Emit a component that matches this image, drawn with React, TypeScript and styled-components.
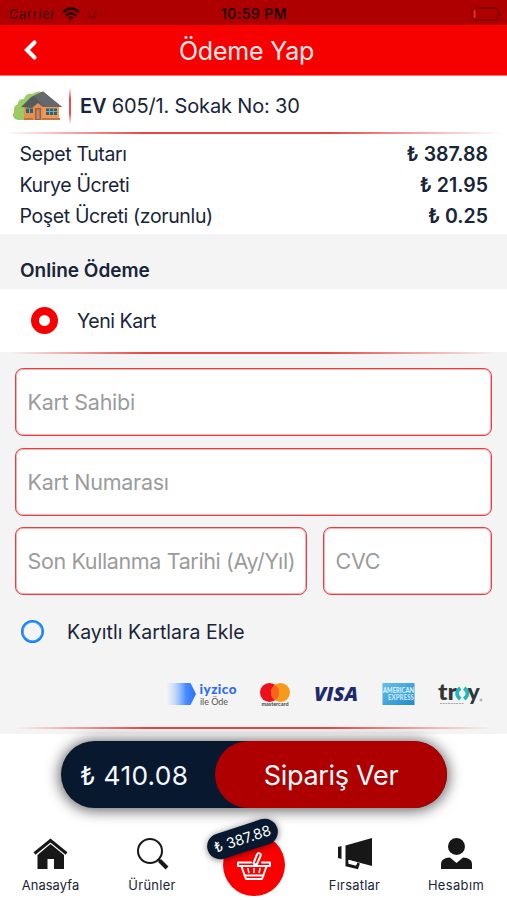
import React from "react";
import styled, { createGlobalStyle } from "styled-components";

const Global = createGlobalStyle`
  * { box-sizing: border-box; }
  body { margin: 0; background: #fff; font-family: Inter, "Liberation Sans", sans-serif; color: #182538; }
  svg { display: block; flex: none; overflow: visible; }
`;

const Screen = styled.main`
  width: 507px;
  height: 900px;
  display: flex;
  flex-direction: column;
  overflow: hidden;
  background: #fff;
  white-space: nowrap;
`;

const StatusBar = styled.div`
  height: 25px;
  flex: none;
  display: grid;
  grid-template-columns: 1fr auto 1fr;
  align-items: center;
  padding: 3px 6px 0 7px;
  background: #ae0000;
  color: #350000;
  font-size: 13px;
`;
const Carrier = styled.div`
  display: flex;
  align-items: center;
  gap: 6px;
  padding-left: 2px;
  letter-spacing: 0.6px;
`;
const Clock = styled.div`
  font-size: 13.8px;
  line-height: 16px;
  font-weight: 600;
  color: #1c0000;
  letter-spacing: 0.5px;
`;
const BatterySlot = styled.div`
  justify-self: end;
`;

const Header = styled.header`
  height: 51px;
  flex: none;
  display: grid;
  grid-template-columns: 60px 1fr 74px;
  align-items: center;
  background: #f70000;
  border-bottom: 1px solid #ff7070;
`;
const BackButton = styled.button`
  border: 0;
  background: none;
  padding: 0 0 0 24px;
`;
const Title = styled.h1`
  margin: 0;
  padding-top: 1px;
  color: #ffe9e9;
  font-size: 25px;
  font-weight: 400;
  text-align: center;
  letter-spacing: -0.2px;
`;

const Divider = styled.div<{ $inset?: number }>`
  height: 2px;
  flex: none;
  margin: 0 ${(p) => p.$inset ?? 5}px;
  background: linear-gradient(90deg, transparent, #e64646 28%, #e64646 65%, transparent);
`;
const VerticalRule = styled.i<{ $height: number }>`
  width: 2px;
  height: ${(p) => p.$height}px;
  background: linear-gradient(transparent, #f04a4f 30%, #f04a4f 70%, transparent);
`;

const Address = styled.section`
  height: 56px;
  flex: none;
  display: flex;
  align-items: center;
  padding: 3px 0 0 13px;
  font-size: 20px;
  letter-spacing: -0.16px;
`;
const AddressText = styled.div`
  margin-left: 9px;
  b { font-weight: 600; }
`;
const HouseSlot = styled.div`
  width: 56px;
`;

const Totals = styled.dl`
  margin: 0;
  height: 100px;
  flex: none;
  padding: 4px 19px 0;
`;
const TotalRow = styled.div`
  height: 31px;
  display: flex;
  align-items: center;
  justify-content: space-between;
  font-size: 19.5px;
`;
const TotalName = styled.dt`
  padding-left: 0.5px;
  letter-spacing: -0.36px;
`;
const TotalValue = styled.dd`
  margin: 0;
  font-weight: 600;
`;

const SectionTitle = styled.h2`
  margin: 0;
  height: 55px;
  flex: none;
  padding: 23px 20px 0;
  background: #f4f4f4;
  font-size: 19px;
  line-height: 28px;
  font-weight: 600;
`;
const CardOption = styled.label`
  height: 63px;
  flex: none;
  display: flex;
  align-items: center;
  gap: 19px;
  padding-left: 31px;
  font-size: 19.5px;
  letter-spacing: -0.45px;
`;
const SelectedDot = styled.span`
  width: 27px;
  height: 27px;
  border: 8.5px solid #f90000;
  border-radius: 50%;
`;
const Payment = styled.section`
  height: 382px;
  flex: none;
  background: #f4f4f4;
`;
const Fields = styled.div`
  padding: 14px 15px 0;
  display: grid;
  grid-template-columns: 292px 169px;
  grid-auto-rows: 68px;
  gap: 11.5px 16px;
`;
const Field = styled.div<{ $wide?: boolean; $spacing?: number }>`
  grid-column: ${(p) => (p.$wide ? "1 / -1" : "auto")};
  display: flex;
  align-items: center;
  padding: 0 0 0 11.5px;
  border: 1px solid #e43f43;
  border-radius: 8px;
  box-shadow: inset 0 0 0 1px rgba(228, 63, 67, 0.4);
  background: #fff;
  color: #9b9b9b;
  font-size: 21.5px;
  letter-spacing: ${(p) => p.$spacing ?? -0.25}px;
`;
const SaveOption = styled.label`
  display: flex;
  align-items: center;
  height: 28px;
  margin-top: 22px;
  padding-left: 21px;
  gap: 23px;
  font-size: 19.5px;
  letter-spacing: 0.04px;
  line-height: 28px;
`;
const SaveText = styled.span`
  padding-top: 1px;
`;
const EmptyDot = styled.span`
  width: 23px;
  height: 23px;
  border: 2px solid #1684f8;
  border-radius: 50%;
  box-shadow: inset 0 0 0 0.6px #1684f8;
`;
const Brands = styled.div`
  height: 82px;
  display: flex;
  align-items: center;
  padding: 16px 0 0 166px;
`;
const BrandSlot = styled.div<{ $width: number }>`
  width: ${(p) => p.$width}px;
  flex: none;
`;

const OrderArea = styled.div`
  height: 93px;
  flex: none;
  padding: 7px 0 0 61px;
`;
const OrderPill = styled.div`
  width: 386px;
  height: 67px;
  display: flex;
  border-radius: 34px;
  background: #08192f;
  color: #f6f8ff;
  font-size: 26.3px;
  box-shadow: 0 1px 14px 2px rgba(0, 0, 0, 0.6);
`;
const OrderTotal = styled.div`
  width: 154px;
  padding: 1px 0 0 19px;
  display: flex;
  align-items: center;
  letter-spacing: 0.3px;
`;
const OrderButton = styled.button`
  flex: 1;
  border: 0;
  padding: 1px 0 0;
  border-radius: 34px;
  background: #ae0000;
  color: #fff;
  font: inherit;
  font-size: 27px;
  letter-spacing: -0.3px;
`;

const Nav = styled.nav`
  height: 73px;
  flex: none;
  display: grid;
  grid-template-columns: 101px 0 102px 101px 101px 0 102px;
`;
const NavItem = styled.a<{ $spacing?: number }>`
  display: flex;
  flex-direction: column;
  align-items: center;
  padding-top: 10px;
  gap: 7px;
  font-size: 12.9px;
  line-height: 17px;
  letter-spacing: ${(p) => p.$spacing ?? 0.1}px;
`;
const NavRule = styled.div`
  padding-top: 20px;
  display: flex;
  justify-content: center;
`;
const Basket = styled.a`
  position: relative;
  justify-self: center;
  width: 62px;
  height: 62px;
  margin: 7px 0 0 0;
  border-radius: 50%;
  background: #fb0000;
  display: grid;
  place-items: center;
`;
const BasketTotal = styled.span`
  position: absolute;
  left: -16.5px;
  top: -8px;
  width: 73px;
  height: 26px;
  border-radius: 13px;
  background: #08192f;
  color: #fff;
  font-size: 14.5px;
  line-height: 26px;
  text-align: center;
  transform: rotate(-18deg);
  box-shadow: 0 1px 7px rgba(0, 0, 0, 0.5);
`;

const Wifi = () => (
  <svg width="18" height="14" viewBox="0 0 18 14" fill="none" stroke="#260000" strokeWidth="2.5">
    <path d="M1 5.2Q9-2 17 5.2M4 8.5Q9 4 14 8.5" />
    <path d="M6.4 10.5Q9 8.4 11.6 10.5L9 13.2Z" fill="#260000" stroke="none" />
  </svg>
);
const Spinner = () => (
  <svg width="12" height="12" viewBox="0 0 12 12" stroke="#5c0000" strokeWidth="1.4" strokeLinecap="round">
    <path d="M6 1v1.8M9.5 2.5 8.3 3.7M11 6H9.2M9.5 9.5 8.3 8.3M6 11V9.2M2.5 9.5l1.2-1.2M1 6h1.8" opacity=".75" />
  </svg>
);
const Battery = () => (
  <svg width="30" height="14" viewBox="0 0 30 14">
    <rect x="1" y="1" width="26" height="12" rx="3" fill="none" stroke="#7c0000" strokeWidth="1.3" />
    <path d="M28.3 5v4q1.4-.6 1.4-2t-1.4-2" fill="#7c0000" />
    <rect x="2.8" y="3" width="1.7" height="8" rx=".7" fill="#ef3131" />
  </svg>
);
const House = () => (
  <svg width="50" height="32" viewBox="0 0 50 32">
    <path d="M14 30H5a5 5 0 0 1-4-8Q0 16 5 14 5 9 11 9q2-6 8-5Q26-1 33 4v12L14 30Z" fill="#9bcb62" />
    <path d="M11 16 29 5l17 12v13H11Z" fill="#e5904f" />
    <path d="M30 17h16v13H30Z" fill="#f09b54" />
    <path d="M8 17 18 7 30 1.500 49 17H30L25 13l-6 5Z" fill="#555c61" />
    <path d="m30 1.500 19 15.500H31L21 6Z" fill="#65696c" />
    <path d="M13 18.500h7v4.500h-7Zm20 0h11v6.500H33Z" fill="#365f69" />
    <path d="M36.500 18.500V25m4-6.500V25M33 21.500h11M16.500 18.500V23" stroke="#80bac0" strokeWidth=".8" />
    <path d="M22 18h6v12h-6Z" fill="#9e6048" />
    <path d="M23.500 19.500h3V29h-3Z" fill="#c18a62" />
    <path d="M11 28h9v2h-9zM29 28h18v2H29z" fill="#bc7448" />
  </svg>
);

const BrandName = styled.text<{ $size: number; $weight?: number; $fill: string; $italic?: boolean }>`
  font-family: ${(p) => (p.$italic ? '"Open Sans"' : "Lato")}, sans-serif;
  font-size: ${(p) => p.$size}px;
  font-weight: ${(p) => p.$weight ?? 400};
  font-style: ${(p) => (p.$italic ? "italic" : "normal")};
  fill: ${(p) => p.$fill};
`;
const Iyzico = () => (
  <svg width="72" height="28" viewBox="0 0 72 28">
    <defs>
      <linearGradient id="iy">
        <stop stopColor="#bfd5ff" stopOpacity=".1" />
        <stop offset=".65" stopColor="#478cff" />
        <stop offset="1" stopColor="#2870f5" />
      </linearGradient>
    </defs>
    <path d="M1 3h23.500l5.500 11-5.500 11H1Z" fill="url(#iy)" />
    <BrandName x="33.500" y="13.500" $size={13.5} $weight={900} $fill="#2f6bf2" textLength="37">iyzico</BrandName>
    <BrandName x="34" y="25" $size={9} $fill="#555" textLength="28">ile Öde</BrandName>
  </svg>
);
const Mastercard = () => (
  <svg width="30" height="28" viewBox="0 0 30 28">
    <circle cx="9.500" cy="12.500" r="9.500" fill="#ec101f" />
    <circle cx="20.500" cy="12.500" r="9.500" fill="#f69a1d" />
    <path d="M15 4.700a9.500 9.500 0 0 1 0 15.600 9.500 9.500 0 0 1 0-15.600" fill="#f66319" />
    <BrandName x="1.500" y="25.500" $size={5.5} $weight={700} $fill="#444" textLength="27">mastercard</BrandName>
  </svg>
);
const Visa = () => (
  <svg width="46" height="28" viewBox="0 0 46 28">
    <BrandName x="1" y="21" $size={20} $weight={800} $italic $fill="#1c2a6c" textLength="44" lengthAdjust="spacingAndGlyphs">VISA</BrandName>
  </svg>
);
const Amex = () => (
  <svg width="33" height="28" viewBox="0 0 33 28">
    <defs>
      <linearGradient id="ax" x2="1" y2="1">
        <stop stopColor="#68bee9" />
        <stop offset="1" stopColor="#218bc9" />
      </linearGradient>
    </defs>
    <path d="M.5 3h32v22H.500Z" fill="url(#ax)" />
    <BrandName x="1" y="13" $size={6.5} $weight={900} $fill="#d8f3ff" textLength="31" lengthAdjust="spacingAndGlyphs">AMERICAN</BrandName>
    <BrandName x="6" y="19.500" $size={6.5} $weight={900} $fill="#c8eaff" textLength="26" lengthAdjust="spacingAndGlyphs">EXPRESS</BrandName>
  </svg>
);
const Troy = () => (
  <svg width="46" height="28" viewBox="0 0 46 28">
    <BrandName x="0" y="20" $size={23} $weight={900} $fill="#333638" textLength="19" lengthAdjust="spacingAndGlyphs">tr</BrandName>
    <path d="M22.300 8q-6.500 5.500 0 11M26.200 8q6.500 5.500 0 11" fill="none" stroke="#20b6bd" strokeWidth="3.700" />
    <BrandName x="29.500" y="20" $size={23} $weight={900} $fill="#333638">y</BrandName>
    <path d="M2 23.500h24" stroke="#aaa" strokeWidth="1" strokeDasharray="2 .7" />
    <circle cx="43" cy="20" r="1" fill="none" stroke="#777" strokeWidth=".6" />
  </svg>
);

const Home = () => (
  <svg width="35" height="33" viewBox="0 0 35 33" fill="#171717">
    <path d="M4.500 18 17.500 7 31 18v14H21V22h-6.500v10h-10Z" />
    <path d="M1.500 16.500 17.500 3.500l16 13" fill="none" stroke="#171717" strokeWidth="3" />
  </svg>
);
const Search = () => (
  <svg width="35" height="33" viewBox="0 0 35 33" fill="none" stroke="#171717">
    <circle cx="15" cy="14" r="12" strokeWidth="2" />
    <path d="m23 22 2 2" strokeWidth="2" />
    <path d="m24.500 23.500 7.500 7.500" strokeWidth="4" />
  </svg>
);
const Megaphone = () => (
  <svg width="35" height="33" viewBox="0 0 35 33" fill="#171717">
    <path d="M1 10 4.500 9v13L1 21ZM8.500 8.500 35 1v28L8.500 22Z" />
    <path d="M10 22v6l10 2.500 1.500-4.500" fill="none" stroke="#171717" strokeWidth="3" />
    <path d="m11.500 24 8.500 2.500" stroke="#fff" strokeWidth="2" />
  </svg>
);
const Person = () => (
  <svg width="35" height="33" viewBox="0 0 35 33" fill="#171717">
    <circle cx="17.500" cy="9.500" r="8.500" />
    <path d="M2 32v-5Q2 21 11 20.500l6.500 5.500 6.500-5.500Q33 21 33 27v5Z" />
  </svg>
);
const BasketIcon = () => (
  <svg width="36" height="32" viewBox="0 0 36 32" fill="none" stroke="#fff" strokeWidth="2" strokeLinejoin="round" strokeLinecap="round">
    <path d="M15 13.500H2V17h32v-3.500h-8M5.500 17.500 10 30h16l4.500-12.500M8.500 26.500h19" />
    <path d="m12 19.500.8 4m5.200-4v4m6-4-.8 4" strokeWidth="1.500" />
    <path d="m17.500 14 3.500-8.500q1-2 2.700-1.200t.8 2.700L21 15q-3 1-3.500-1Z" />
  </svg>
);

const totals = [
  ["Sepet Tutarı", "₺ 387.88"],
  ["Kurye Ücreti", "₺ 21.95"],
  ["Poşet Ücreti (zorunlu)", "₺ 0.25"],
];

export default function App() {
  return (
    <Screen>
      <Global />
      <StatusBar>
        <Carrier>Carrier <Wifi /><Spinner /></Carrier>
        <Clock>10:59 PM</Clock>
        <BatterySlot><Battery /></BatterySlot>
      </StatusBar>
      <Header>
        <BackButton aria-label="Geri">
          <svg width="13" height="20" viewBox="0 0 13 20" fill="none" stroke="#fff" strokeWidth="4.200" strokeLinecap="round">
            <path d="M10.500 2.500 3 10l7.500 7.500" />
          </svg>
        </BackButton>
        <Title>Ödeme Yap</Title>
      </Header>
      <Address>
        <HouseSlot><House /></HouseSlot>
        <VerticalRule $height={36} />
        <AddressText><b>EV</b> 605/1. Sokak No: 30</AddressText>
      </Address>
      <Divider />
      <Totals>
        {totals.map(([name, value]) => (
          <TotalRow key={name}>
            <TotalName>{name}</TotalName>
            <TotalValue>{value}</TotalValue>
          </TotalRow>
        ))}
      </Totals>
      <SectionTitle>Online Ödeme</SectionTitle>
      <CardOption><SelectedDot />Yeni Kart</CardOption>
      <Payment>
        <Divider $inset={10} />
        <Fields>
          <Field $wide>Kart Sahibi</Field>
          <Field $wide>Kart Numarası</Field>
          <Field $spacing={-0.37}>Son Kullanma Tarihi (Ay/Yıl)</Field>
          <Field>CVC</Field>
        </Fields>
        <SaveOption><EmptyDot /><SaveText>Kayıtlı Kartlara Ekle</SaveText></SaveOption>
        <Brands>
          <BrandSlot $width={94}><Iyzico /></BrandSlot>
          <BrandSlot $width={53}><Mastercard /></BrandSlot>
          <BrandSlot $width={69}><Visa /></BrandSlot>
          <BrandSlot $width={56}><Amex /></BrandSlot>
          <BrandSlot $width={46}><Troy /></BrandSlot>
        </Brands>
        <Divider $inset={14} />
      </Payment>
      <OrderArea>
        <OrderPill>
          <OrderTotal>₺ 410.08</OrderTotal>
          <OrderButton>Sipariş Ver</OrderButton>
        </OrderPill>
      </OrderArea>
      <Nav>
        <NavItem><Home />Anasayfa</NavItem>
        <NavRule><VerticalRule $height={38} /></NavRule>
        <NavItem $spacing={0.3}><Search />Ürünler</NavItem>
        <Basket><BasketIcon /><BasketTotal>₺ 387.88</BasketTotal></Basket>
        <NavItem $spacing={0.25}><Megaphone />Fırsatlar</NavItem>
        <NavRule><VerticalRule $height={38} /></NavRule>
        <NavItem $spacing={0.4}><Person />Hesabım</NavItem>
      </Nav>
    </Screen>
  );
}
